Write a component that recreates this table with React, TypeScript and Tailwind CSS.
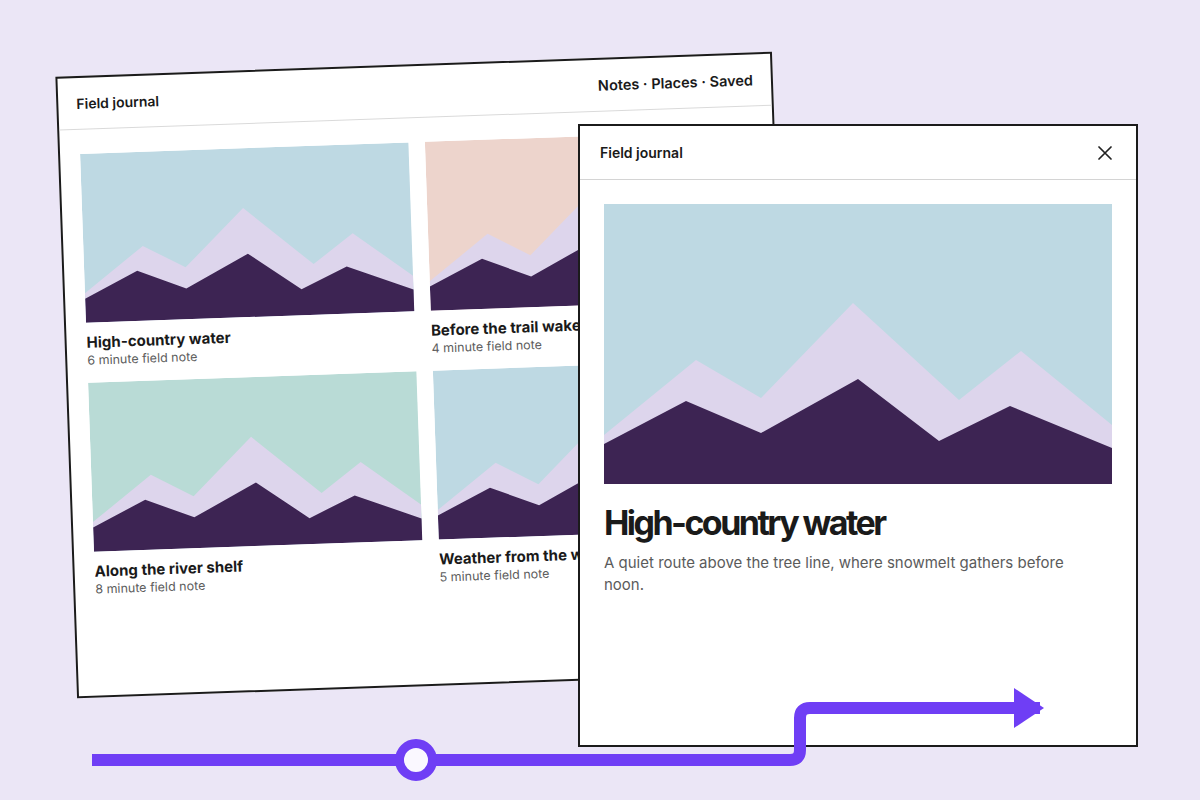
import React from "react";

const Mountains = ({ sky }: { sky: string }) => (
  <svg viewBox="0 0 508 280" preserveAspectRatio="none" className="block h-full w-full">
    <rect width="508" height="280" fill={sky} />
    <polygon
      points="0,231 92,156 157,194 249,99 355,196 417,147 508,221 508,280 0,280"
      fill="#ddd5ec"
    />
    <polygon
      points="0,240 82,197 157,229 254,175 335,237 406,202 508,244 508,280 0,280"
      fill="#3d2453"
    />
  </svg>
);

const notes = [
  { title: "High-country water", meta: "6 minute field note", sky: "#bed9e3" },
  { title: "Before the trail wakes", meta: "4 minute field note", sky: "#edd4cc" },
  { title: "Along the river shelf", meta: "8 minute field note", sky: "#b9dbd6" },
  { title: "Weather from the west", meta: "5 minute field note", sky: "#bed9e3" },
];

export default function App() {
  return (
    <div className="relative h-[800px] w-[1200px] overflow-hidden bg-[#ebe6f6] font-[Inter,sans-serif] text-[#1a1a1a]">
      {/* Tilted journal window */}
      <div className="absolute left-[66px] top-[64px] h-[622px] w-[717px] -rotate-2 border-2 border-[#1b1b1b] bg-white">
        <div className="flex h-[52px] items-center justify-between border-b border-[#dadada] px-[18px]">
          <span className="text-[14px] font-semibold">Field journal</span>
          <nav className="text-[14.5px] font-semibold">Notes · Places · Saved</nav>
        </div>
        <div className="grid grid-cols-2 gap-x-4 gap-y-[14px] px-5 pt-6">
          {notes.map((n) => (
            <div key={n.title} className="min-w-0">
              <div className="h-[169px]">
                <Mountains sky={n.sky} />
              </div>
              <div className="mt-[10px] truncate text-[15px] font-bold leading-[19px]">{n.title}</div>
              <div className="mt-px text-[12.5px] leading-4 text-[#5c5c5c]">{n.meta}</div>
            </div>
          ))}
        </div>
      </div>

      {/* Detail panel */}
      <div className="absolute left-[578px] top-[124px] h-[623px] w-[560px] border-2 border-[#1b1b1b] bg-white">
        <div className="flex h-[54px] items-center justify-between border-b border-[#d4d4d4] pl-5 pr-6">
          <span className="text-[14px] font-semibold">Field journal</span>
          <svg width="14" height="14" viewBox="0 0 14 14" className="block">
            <path d="M1 1 L13 13 M13 1 L1 13" stroke="#222" strokeWidth="1.7" strokeLinecap="round" />
          </svg>
        </div>
        <div className="p-6">
          <div className="h-[280px]">
            <Mountains sky="#bed9e3" />
          </div>
          <h1 className="mt-[19px] text-[34px] font-bold leading-[40px] tracking-[-0.075em]">
            High-country water
          </h1>
          <p className="mt-[9px] max-w-[485px] text-[15px] leading-[22px] text-[#5b5b5b]">
            A quiet route above the tree line, where snowmelt gathers before noon.
          </p>
        </div>
      </div>

      {/* Route line overlay */}
      <svg
        className="pointer-events-none absolute left-0 top-0"
        width="1200"
        height="800"
        viewBox="0 0 1200 800"
      >
        <path
          d="M92 760 H790 Q800 760 800 750 V718 Q800 708 810 708 H1040"
          fill="none"
          stroke="#6f3ef5"
          strokeWidth="12"
        />
        <polygon points="1014,688 1044,708 1014,728" fill="#6f3ef5" />
        <circle cx="416" cy="760" r="16.5" fill="#faf8ff" stroke="#6f3ef5" strokeWidth="9" />
      </svg>
    </div>
  );
}
